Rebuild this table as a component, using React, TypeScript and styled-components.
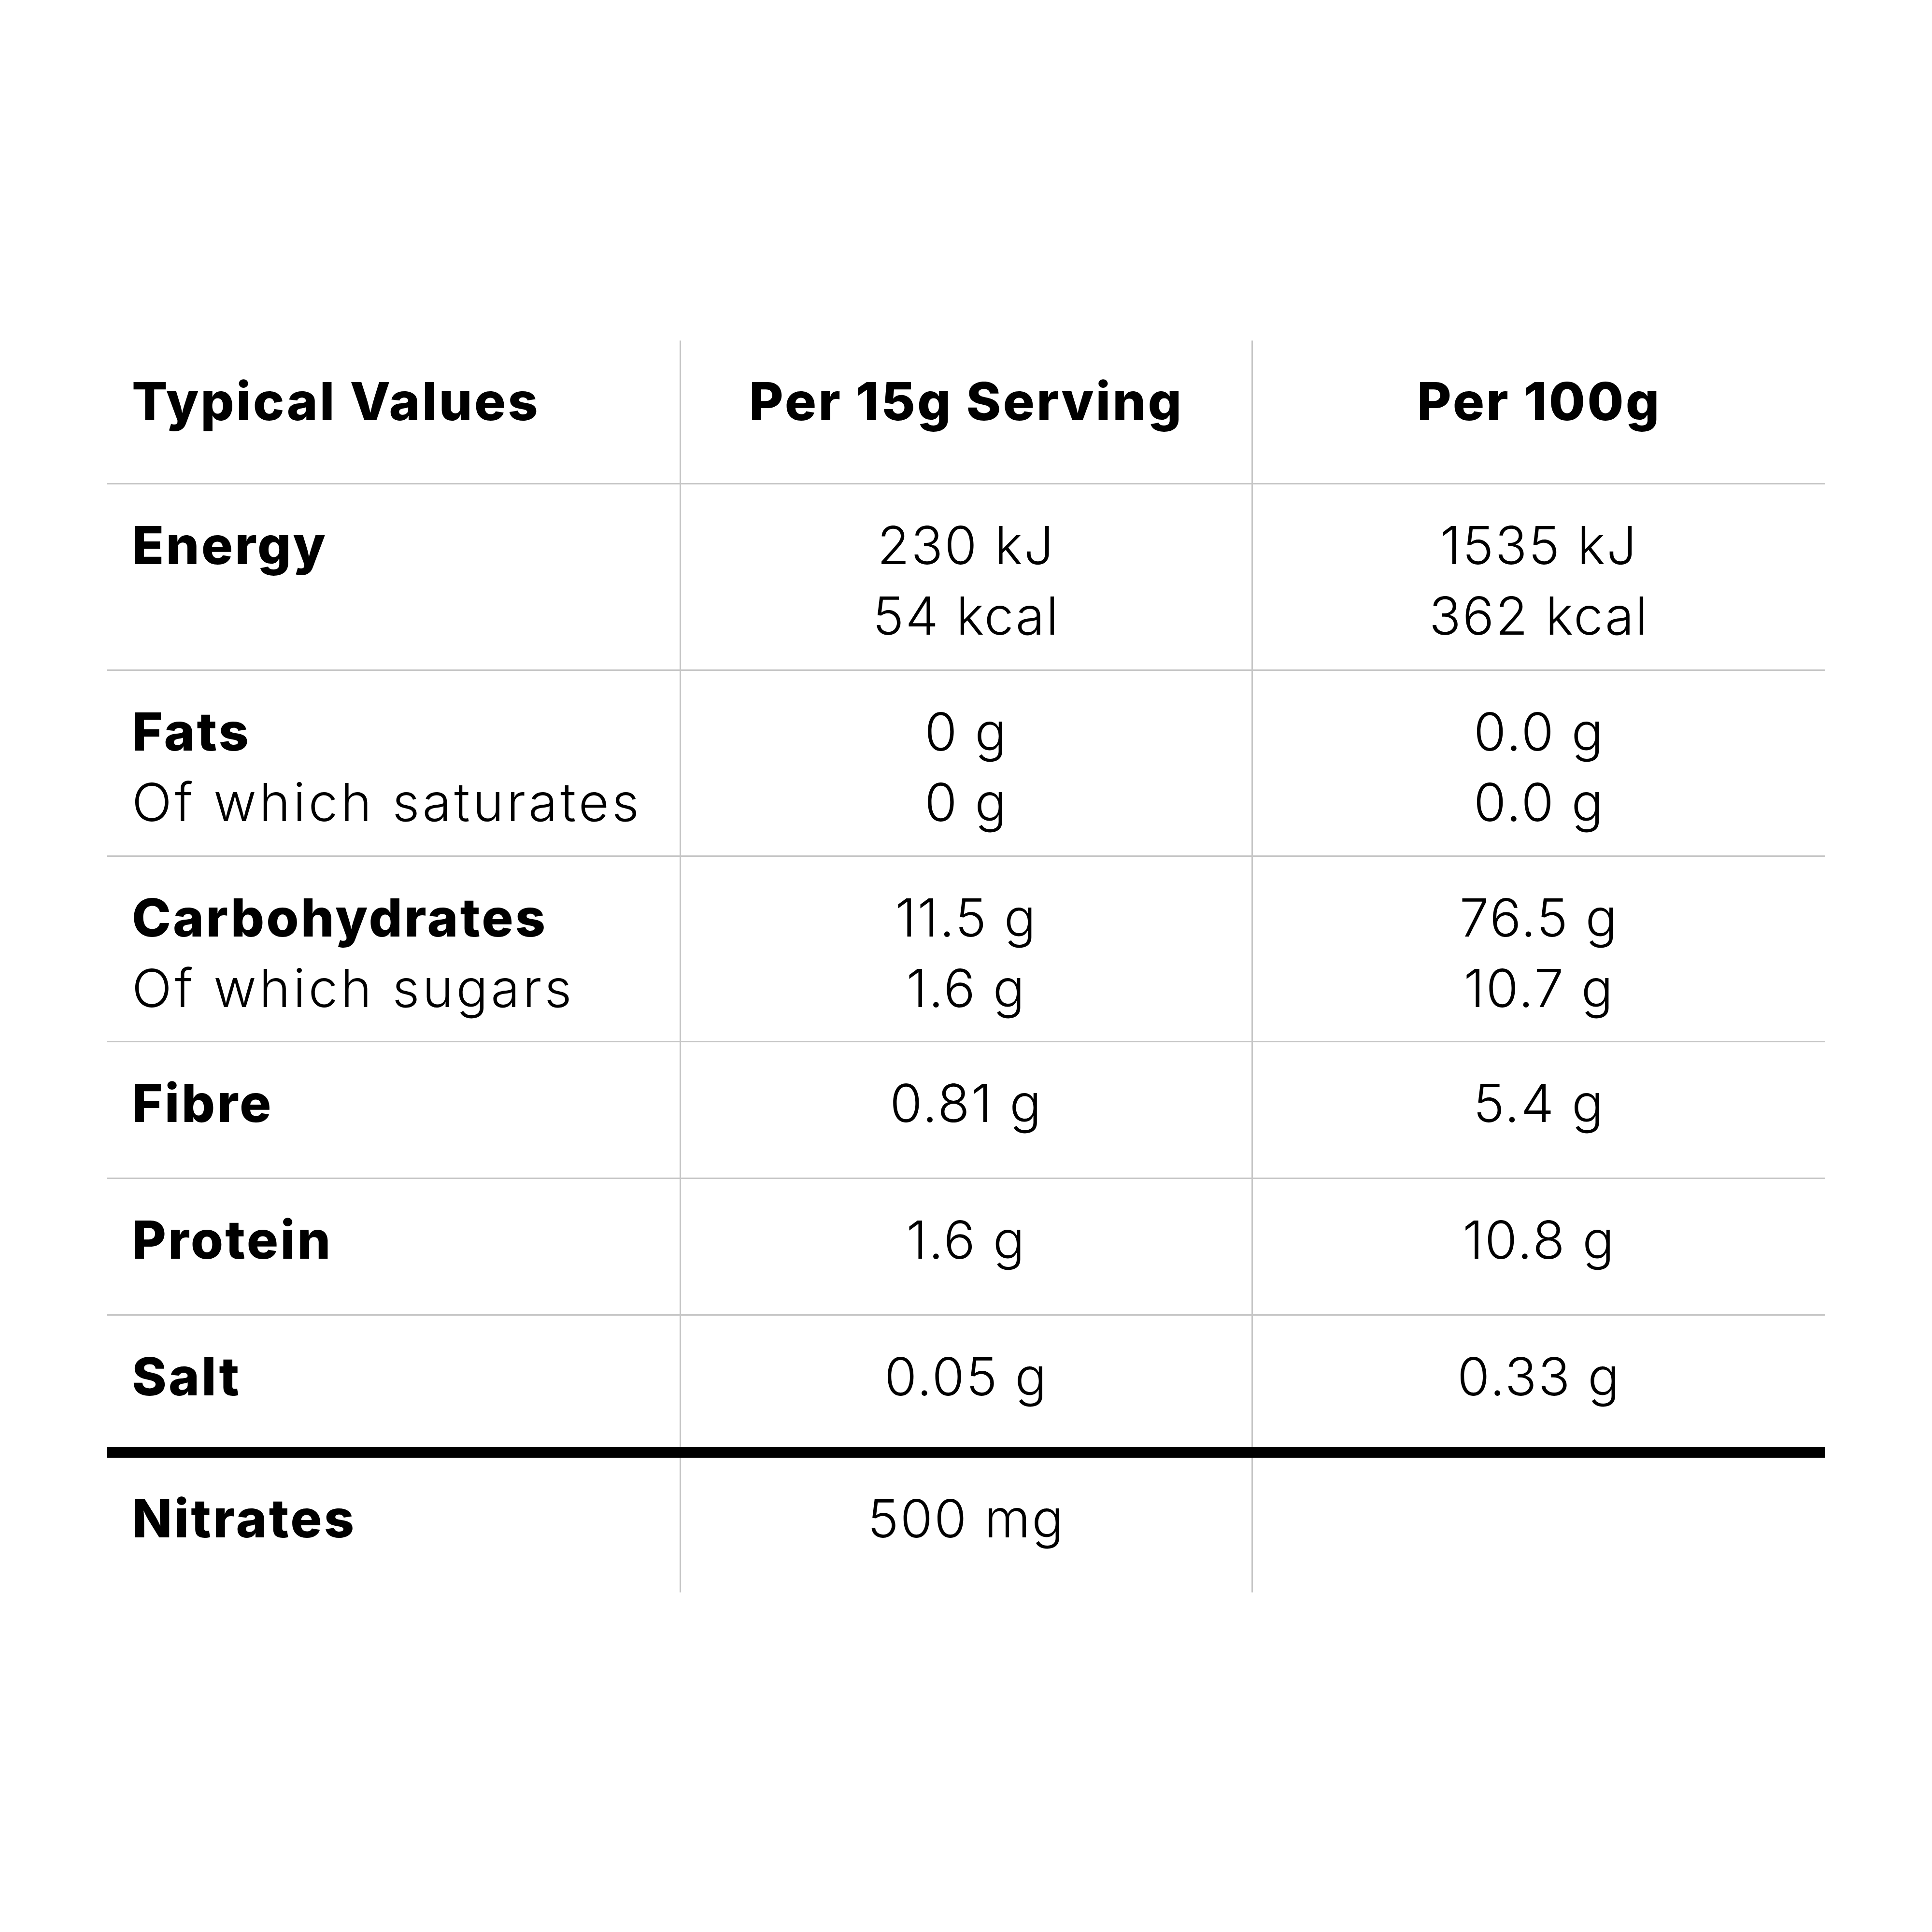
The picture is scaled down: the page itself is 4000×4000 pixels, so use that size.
import React from 'react';
import styled, { createGlobalStyle } from 'styled-components';

const GlobalStyle = createGlobalStyle`
  html, body { margin: 0; padding: 0; background: #ffffff; }
  body {
    font-family: Inter, "Noto Sans", sans-serif;
    color: #000000;
  }
`;

const Page = styled.div`
  width: 4000px;
  height: 4000px;
  box-sizing: border-box;
  padding-top: 705px;
  display: flex;
  justify-content: center;
  align-items: flex-start;
  background: #ffffff;
`;

const Table = styled.div`
  width: 3558px;
  display: flex;
  flex-direction: column;
`;

type Rule = 'thin' | 'thick' | 'none';

const Row = styled.div<{ $h: number; $rule: Rule }>`
  display: grid;
  grid-template-columns: 1186px 1184px 1188px;
  height: ${(p) => p.$h}px;
  border-bottom: ${(p) =>
    p.$rule === 'thin' ? '3px solid #c6c6c6' : p.$rule === 'thick' ? '22px solid #000000' : 'none'};
`;

const Cell = styled.div<{ $align: 'left' | 'center'; $divider?: boolean }>`
  box-sizing: border-box;
  padding-top: 52px;
  padding-left: ${(p) => (p.$align === 'left' ? '52px' : '0')};
  text-align: ${(p) => p.$align};
  border-left: ${(p) => (p.$divider ? '3px solid #c6c6c6' : 'none')};
  display: flex;
  flex-direction: column;
  align-items: ${(p) => (p.$align === 'left' ? 'flex-start' : 'center')};
`;

type Kind = 'bold' | 'label' | 'value';

const Line = styled.span<{ $kind: Kind }>`
  display: block;
  font-size: 109px;
  line-height: 146px;
  font-weight: ${(p) => (p.$kind === 'bold' ? 800 : 300)};
  letter-spacing: ${(p) => (p.$kind === 'bold' ? '4px' : p.$kind === 'label' ? '6px' : '3px')};
  white-space: nowrap;
`;

type RowData = {
  labels: { text: string; bold: boolean }[];
  a: string[];
  b: string[];
  h: number;
  rule: Rule;
  header?: boolean;
};

const rows: RowData[] = [
  {
    labels: [{ text: 'Typical Values', bold: true }],
    a: ['Per 15g Serving'],
    b: ['Per 100g'],
    h: 295,
    rule: 'thin',
    header: true,
  },
  {
    labels: [{ text: 'Energy', bold: true }],
    a: ['230 kJ', '54 kcal'],
    b: ['1535 kJ', '362 kcal'],
    h: 383,
    rule: 'thin',
  },
  {
    labels: [
      { text: 'Fats', bold: true },
      { text: 'Of which saturates', bold: false },
    ],
    a: ['0 g', '0 g'],
    b: ['0.0 g', '0.0 g'],
    h: 382,
    rule: 'thin',
  },
  {
    labels: [
      { text: 'Carbohydrates', bold: true },
      { text: 'Of which sugars', bold: false },
    ],
    a: ['11.5 g', '1.6 g'],
    b: ['76.5 g', '10.7 g'],
    h: 381,
    rule: 'thin',
  },
  {
    labels: [{ text: 'Fibre', bold: true }],
    a: ['0.81 g'],
    b: ['5.4 g'],
    h: 280,
    rule: 'thin',
  },
  {
    labels: [{ text: 'Protein', bold: true }],
    a: ['1.6 g'],
    b: ['10.8 g'],
    h: 280,
    rule: 'thin',
  },
  {
    labels: [{ text: 'Salt', bold: true }],
    a: ['0.05 g'],
    b: ['0.33 g'],
    h: 272,
    rule: 'thick',
  },
  {
    labels: [{ text: 'Nitrates', bold: true }],
    a: ['500 mg'],
    b: [],
    h: 279,
    rule: 'none',
  },
];

export default function App() {
  return (
    <>
      <GlobalStyle />
      <Page>
        <Table>
          {rows.map((r, i) => (
            <Row key={i} $h={r.h} $rule={r.rule}>
              <Cell $align="left">
                {r.labels.map((l, j) => (
                  <Line key={j} $kind={l.bold ? 'bold' : 'label'}>
                    {l.text}
                  </Line>
                ))}
              </Cell>
              <Cell $align="center" $divider>
                {r.a.map((t, j) => (
                  <Line key={j} $kind={r.header ? 'bold' : 'value'}>
                    {t}
                  </Line>
                ))}
              </Cell>
              <Cell $align="center" $divider>
                {r.b.map((t, j) => (
                  <Line key={j} $kind={r.header ? 'bold' : 'value'}>
                    {t}
                  </Line>
                ))}
              </Cell>
            </Row>
          ))}
        </Table>
      </Page>
    </>
  );
}
